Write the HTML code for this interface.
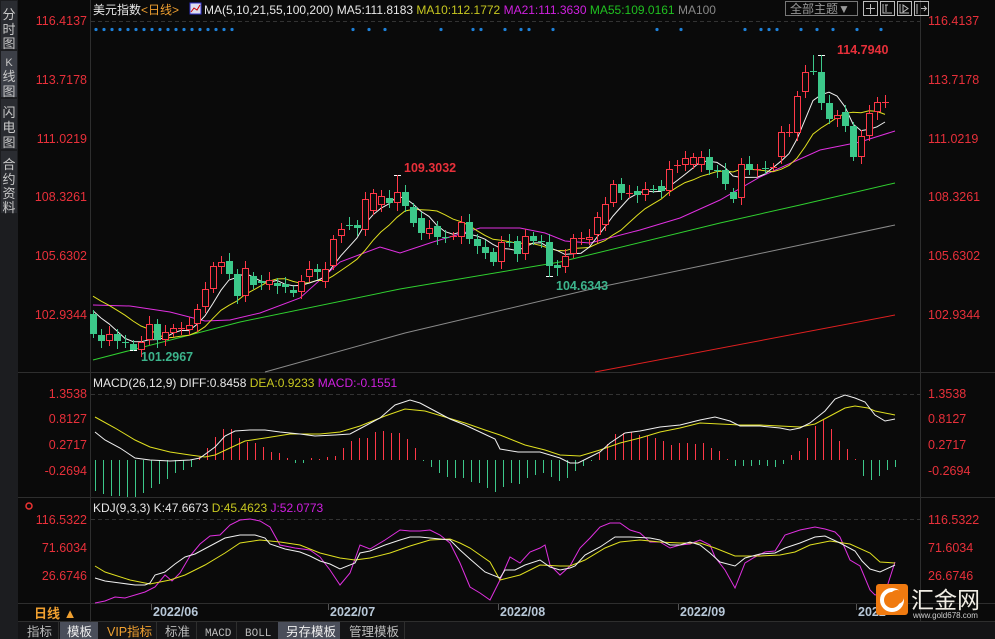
<!DOCTYPE html>
<html><head><meta charset="utf-8"><style>
html,body{margin:0;padding:0;background:#0a0a0a;width:995px;height:639px;overflow:hidden;font-family:"Liberation Sans","Noto Sans CJK SC",sans-serif}
#w{position:relative;width:995px;height:639px}
svg{position:absolute;left:0;top:0}
</style></head><body><div id="w">
<svg id="s" width="995" height="639" viewBox="0 0 995 639" xmlns="http://www.w3.org/2000/svg" font-family="Liberation Sans, Noto Sans CJK SC, sans-serif">
<rect x="0" y="0" width="18" height="639" fill="#1c1d20"/>
<rect x="1" y="1" width="16" height="48" fill="#2a2c31"/>
<rect x="1" y="51" width="16" height="46" fill="#3c3f47"/>
<rect x="1" y="99" width="16" height="50" fill="#2a2c31"/>
<rect x="1" y="151" width="16" height="62" fill="#2a2c31"/>
<g fill="#c8c8c8" font-size="13" text-anchor="middle">
<text x="9" y="19">分</text><text x="9" y="34">时</text><text x="9" y="48">图</text>
<text x="9" y="66" font-size="11">K</text><text x="9" y="81">线</text><text x="9" y="96">图</text>
<text x="9" y="117">闪</text><text x="9" y="132">电</text><text x="9" y="147">图</text>
<text x="9" y="169">合</text><text x="9" y="184">约</text><text x="9" y="198">资</text><text x="9" y="212">料</text>
</g>
<g stroke="#2e2e2e" stroke-width="1">
<line x1="90.5" y1="0" x2="90.5" y2="622"/>
<line x1="920.5" y1="0" x2="920.5" y2="622"/>
<line x1="18" y1="372.5" x2="995" y2="372.5"/>
<line x1="18" y1="497.5" x2="995" y2="497.5"/>
<line x1="18" y1="603.5" x2="995" y2="603.5"/>
<line x1="18" y1="621.5" x2="995" y2="621.5"/>
</g>
<g stroke="#333" stroke-dasharray="4 3">
<line x1="91" y1="21.5" x2="920" y2="21.5"/>
<line x1="91" y1="394.5" x2="920" y2="394.5"/>
<line x1="91" y1="519.5" x2="920" y2="519.5"/>
</g>
<g fill="#e8303a" font-size="12.5">
<g text-anchor="end">
<text x="87" y="25">116.4137</text><text x="87" y="84">113.7178</text><text x="87" y="143">111.0219</text><text x="87" y="201">108.3261</text><text x="87" y="260">105.6302</text><text x="87" y="319">102.9344</text>
<text x="87" y="398">1.3538</text><text x="87" y="423">0.8127</text><text x="87" y="449">0.2717</text><text x="87" y="475">-0.2694</text>
<text x="87" y="524">116.5322</text><text x="87" y="552">71.6034</text><text x="87" y="580">26.6746</text>
</g>
<text x="928" y="25">116.4137</text><text x="928" y="84">113.7178</text><text x="928" y="143">111.0219</text><text x="928" y="201">108.3261</text><text x="928" y="260">105.6302</text><text x="928" y="319">102.9344</text>
<text x="928" y="398">1.3538</text><text x="928" y="423">0.8127</text><text x="928" y="449">0.2717</text><text x="928" y="475">-0.2694</text>
<text x="928" y="524">116.5322</text><text x="928" y="552">71.6034</text><text x="928" y="580">26.6746</text>
</g>
<g font-size="12">
<text x="93" y="14" fill="#e8e8e8">美元指数<tspan fill="#f0a030">&lt;日线&gt;</tspan></text>
<rect x="190" y="3" width="11" height="11" fill="#dde" stroke="#33c" stroke-width="1"/>
<polyline points="191,12 194,8 197,10 200,5" fill="none" stroke="#c00" stroke-width="1"/>
<text x="204" y="14" fill="#e8e8e8">MA(5,10,21,55,100,200) <tspan>MA5:111.8183</tspan> <tspan fill="#c8c820">MA10:112.1772</tspan> <tspan fill="#d020e0">MA21:111.3630</tspan> <tspan fill="#20c020">MA55:109.0161</tspan> <tspan fill="#888">MA100</tspan></text>
<rect x="785.5" y="1.5" width="72" height="14" fill="none" stroke="#777"/>
<text x="790" y="13" fill="#999">全部主题▼</text>
<g stroke="#bbb" fill="none"><rect x="863.5" y="1.5" width="14" height="14"/><rect x="880.5" y="1.5" width="14" height="14"/><rect x="897.5" y="1.5" width="14" height="14"/><rect x="914.5" y="1.5" width="14" height="14"/>
<path d="M870.5 4v10M866 8.5h9M883 4v9h9M886 5v7M885 5h3M900 4v9h9M903 5v7l5-3.5z M917 4v10M921 8.5h5M924 6l2.5 2.5-2.5 2.5"/></g>
<text x="93" y="387" fill="#e8e8e8">MACD(26,12,9) DIFF:0.8458 <tspan fill="#c8c820">DEA:0.9233</tspan> <tspan fill="#d020e0">MACD:-0.1551</tspan></text>
<text x="93" y="512" fill="#e8e8e8">KDJ(9,3,3) K:47.6673 <tspan fill="#c8c820">D:45.4623</tspan> <tspan fill="#d020e0">J:52.0773</tspan></text>
</g>
<circle cx="29" cy="506" r="3" fill="none" stroke="#e33" stroke-width="1.5"/>
<g id="chart"></g>
<g font-size="12.5" font-weight="bold">
<text x="404" y="172" fill="#e8303a">109.3032</text>
<text x="837" y="54" fill="#e8303a">114.7940</text>
<text x="141" y="361" fill="#3cb48c">101.2967</text>
<text x="556" y="290" fill="#3cb48c">104.6343</text>
</g>
<g font-size="12.5" font-weight="bold" fill="#b8c8d8">
<text x="153" y="616">2022/06</text><text x="330" y="616">2022/07</text><text x="500" y="616">2022/08</text><text x="680" y="616">2022/09</text><text x="858" y="616">2022</text>
</g>
<g stroke="#555"><line x1="151.5" y1="604" x2="151.5" y2="610"/><line x1="328.5" y1="604" x2="328.5" y2="610"/><line x1="498.5" y1="604" x2="498.5" y2="610"/><line x1="678.5" y1="604" x2="678.5" y2="610"/><line x1="856.5" y1="604" x2="856.5" y2="610"/></g>
<text x="34" y="618" fill="#f0a030" font-size="13" font-weight="bold">日线 ▲</text>
<rect x="18" y="622" width="977" height="17" fill="#141416"/>
<g font-size="12.5" fill="#bbb">
<rect x="60" y="622" width="38" height="17" fill="#4a4e5a"/>
<rect x="278" y="622" width="62" height="17" fill="#4a4e5a"/>
<text x="27" y="636">指标</text><text x="67" y="636" fill="#eee">模板</text><text x="107" y="636" fill="#f0a030">VIP指标</text><text x="165" y="636">标准</text>
<text x="205" y="636" font-family="Liberation Mono, monospace" font-size="11">MACD</text><text x="245" y="636" font-family="Liberation Mono, monospace" font-size="11">BOLL</text>
<text x="286" y="636" fill="#eee">另存模板</text><text x="349" y="636">管理模板</text>
</g>
<g stroke="#2e2e2e"><line x1="58.5" y1="622" x2="58.5" y2="639"/><line x1="156.5" y1="622" x2="156.5" y2="639"/><line x1="196.5" y1="622" x2="196.5" y2="639"/><line x1="236.5" y1="622" x2="236.5" y2="639"/><line x1="404.5" y1="622" x2="404.5" y2="639"/></g>
<rect x="876" y="584" width="32" height="31" rx="3" fill="#f07a10"/>
<circle cx="892" cy="600" r="10" fill="none" stroke="#fff" stroke-width="4"/>
<circle cx="897" cy="597" r="7" fill="#f07a10"/>
<text x="911" y="608" fill="#f0ece4" font-size="23" font-family="Noto Sans CJK SC, sans-serif">汇金网</text>
<text x="913" y="618" fill="#ccc" font-size="8">www.gold678.com</text>
</svg>
<script>
var NS="http://www.w3.org/2000/svg",G=document.getElementById("chart");
function el(t,a){var e=document.createElementNS(NS,t);for(var k in a)e.setAttribute(k,a[k]);G.appendChild(e);return e}
function pl(pts,c){el("polyline",{points:pts.map(function(p){return p.join(",")}).join(" "),fill:"none",stroke:c,"stroke-width":1})}
[96,104,112,120,128,136,144,152,160,168,176,184,192,200,208,216,224,232,353,369,385,441,473,481,505,521,529,553,657,681,745,761,769,777,801,817,833,857,881].forEach(function(x){el("circle",{cx:x,cy:29.5,r:1.6,fill:"#1e80d8"})});
pl([[265,372],[405,333],[600,287],[720,262],[895,225]],"#8a8a8a");
pl([[595,372],[895,315]],"#e02020");
pl([[93,360],[240,322],[400,289],[560,262],[720,223],[800,205],[895,183]],"#30d030");
pl([[93,305],[130,306],[170,312],[205,321],[230,320],[260,313],[300,298],[340,262],[380,247],[400,253],[433,242],[480,228],[520,228],[545,233],[565,241],[590,243],[640,230],[680,218],[720,200],[760,177],[820,150],[860,142],[895,131]],"#e030e0");
var C=[[314,334],[335,341],[341,334],[334,341],[342,342],[344,350],[350,342],[340,324],[324,340],[340,332],[333,328],[328,328],[330,325],[324,309],[307,289],[289,266],[267,262],[261,274],[274,296],[296,268],[276,285],[281,283],[285,280],[283,286],[284,287],[290,293],[292,281],[277,269],[269,272],[282,269],[266,239],[236,229],[225,225],[225,228],[230,199],[211,193],[205,196],[198,203],[203,192],[192,206],[207,223],[218,233],[234,228],[226,237],[237,237],[236,236],[237,222],[222,239],[239,246],[247,253],[252,262],[262,242],[242,242],[241,254],[254,236],[236,241],[241,241],[242,266],[265,268],[267,256],[254,238],[238,238],[240,237],[235,217],[225,204],[203,184],[184,193],[193,193],[191,195],[195,189],[189,189],[186,191],[191,169],[165,165],[165,158],[165,157],[165,157],[157,170],[170,170],[170,184],[192,199],[198,164],[164,170],[169,169],[168,168],[167,167],[157,132],[132,132],[133,96],[92,72],[71,71],[72,103],[103,119],[119,115],[112,126],[126,157],[157,136],[136,113],[112,102],[102,102]];
var HI={38:175,90:55,91:55},LO={5:351,57:277};
var closes=C.map(function(c){return c[1]});
function ma(n,pad){var r=[];for(var i=0;i<closes.length;i++){var s=0;for(var j=i-n+1;j<=i;j++)s+=(j<0?pad:closes[j]);r.push([93+8*i,+(s/n).toFixed(1)])}return r}
pl(ma(10,292),"#e0e020");
pl(ma(5,305),"#f0f0f0");
C.forEach(function(c,i){var x=93+8*i,o=c[0],cl=c[1],t=Math.min(o,cl),b=Math.max(o,cl),up=cl<o||(o==cl&&i%2);
 var col=up?"#ff3848":"#3cc88a";if(o==cl)col=(i==91||i==38)?"#fff":col;
 var h=HI[i]||t-4-(i*7%5),l=LO[i]||b+4+(i*3%5);
 if(i==5||i==57||i==38||i==91){el("line",{x1:x-3,y1:(i==38||i==91)?h+0.5:l-0.5,x2:x+4,y2:(i==38||i==91)?h+0.5:l-0.5,stroke:"#fff"})}
 el("line",{x1:x+0.5,y1:h,x2:x+0.5,y2:l,stroke:col});
 if(b-t<1)el("line",{x1:x-3,y1:t+0.5,x2:x+4,y2:t+0.5,stroke:col});
 else if(up)el("rect",{x:x-2.5,y:t+0.5,width:6,height:b-t-1,fill:"#0a0a0a",stroke:col});
 else el("rect",{x:x-3,y:t,width:7,height:b-t,fill:col});
});
var H=[491,494,496,496,497,497,493,488,484,479,473,470,467,457,448,437,429,429,438,442,443,447,452,453,458,463,463,458,459,457,456,448,441,438,438,432,431,433,433,439,448,461,467,473,477,478,478,482,483,488,492,487,483,484,478,475,473,477,481,478,471,466,461,453,444,434,433,432,435,436,438,441,445,443,443,444,443,448,451,459,466,466,466,465,466,467,464,455,451,438,426,420,429,441,449,459,476,480,476,470,467];
H.forEach(function(y,k){var x=95.5+8*k;el("line",{x1:x,y1:460,x2:x,y2:y,stroke:y<460?"#ff3848":"#3cc88a"})});
pl([[95,417],[115,428],[135,440],[150,447],[170,452],[190,455],[205,457],[215,455],[230,448],[245,441],[265,438],[290,434],[320,434],[340,432],[360,426],[385,416],[405,409],[425,411],[445,417],[465,423],[485,430],[500,435],[525,445],[545,450],[560,455],[580,456],[600,450],[620,443],[640,438],[660,432],[680,428],[700,423],[720,424],[740,425],[760,425],[780,426],[800,427],[815,424],[830,416],[845,408],[855,406],[868,408],[875,411],[895,415]],"#e0e020");
pl([[95,432],[105,440],[120,448],[135,458],[150,460],[170,461],[190,460],[200,458],[215,447],[225,436],[235,431],[250,430],[265,430],[280,432],[300,434],[315,436],[335,435],[350,434],[365,426],[380,418],[395,405],[410,400],[420,403],[435,411],[450,419],[465,425],[480,432],[495,439],[500,449],[518,452],[540,452],[560,458],[570,463],[578,463],[590,457],[600,452],[610,443],[625,433],[640,431],[660,427],[680,425],[700,420],[715,417],[730,421],[740,426],[760,426],[780,428],[790,430],[800,428],[810,423],[825,411],[835,399],[845,395],[855,398],[865,402],[875,415],[885,421],[895,419]],"#f0f0f0");
pl([[95,603],[105,601],[115,597],[125,598],[135,595],[145,592],[155,587],[165,575],[172,581],[180,573],[190,556],[200,544],[210,536],[220,535],[230,525],[240,520],[250,519],[260,521],[270,527],[280,545],[295,548],[310,550],[320,557],[330,570],[340,585],[350,573],[360,545],[370,549],[385,540],[400,530],[410,531],[420,531],[430,530],[440,535],[450,543],[460,563],[470,587],[480,593],[490,600],[500,580],[510,557],[520,563],[530,552],[540,548],[545,545],[550,565],[560,575],[570,566],[580,548],[590,538],[600,527],[610,523],[620,523],[630,530],[640,533],[650,542],[660,542],[670,548],[680,545],[690,544],[700,540],[710,545],[715,557],[725,570],[735,588],[745,563],[755,557],[765,552],[775,551],[785,535],[800,530],[815,527],[825,529],[835,532],[840,537],[850,560],[860,566],[870,590],[875,595],[885,593],[895,562]],"#e030e0");
pl([[95,566],[105,572],[130,580],[150,584],[170,580],[185,575],[205,565],[225,553],[240,543],[260,540],[280,542],[300,545],[320,553],[340,558],[355,560],[370,558],[390,553],[410,546],[430,540],[450,539],[460,543],[470,548],[490,562],[500,580],[520,575],[540,565],[560,566],[570,566],[585,560],[605,548],[620,542],[640,540],[660,542],[680,543],[700,543],[715,548],[735,556],[760,556],[780,555],[795,552],[810,545],[830,541],[850,544],[870,553],[880,562],[895,563]],"#e0e020");
pl([[95,578],[105,581],[120,583],[135,585],[145,585],[150,583],[155,575],[165,572],[175,564],[185,557],[195,554],[210,546],[225,538],[240,535],[255,535],[265,538],[270,544],[285,549],[300,552],[310,556],[320,561],[330,564],[340,569],[355,563],[360,553],[370,551],[385,545],[400,540],[410,537],[420,537],[440,539],[450,540],[460,550],[470,559],[485,572],[500,578],[505,570],[515,570],[525,565],[540,560],[550,567],[560,570],[570,568],[575,566],[585,555],[600,547],[615,537],[630,537],[650,538],[660,540],[670,545],[680,545],[690,542],[700,545],[710,553],[720,562],[735,566],[745,558],[760,554],[775,553],[785,548],[800,543],[815,537],[825,536],[840,543],[855,551],[862,561],[870,569],[880,572],[895,565]],"#f0f0f0");
</script>
</div></body></html>
